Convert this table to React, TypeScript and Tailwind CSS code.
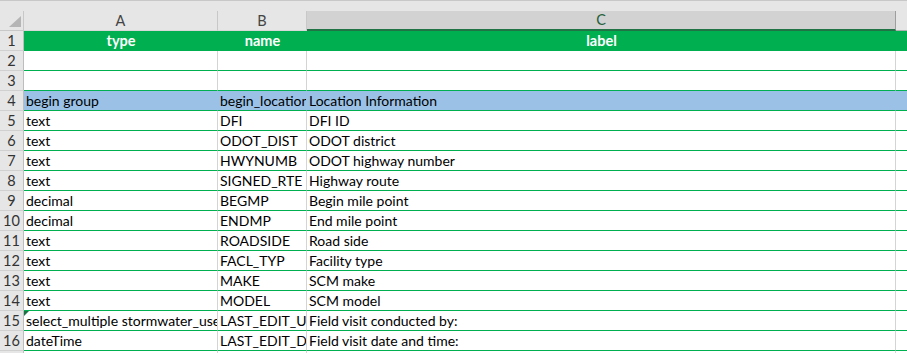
import React from 'react';

const rows: [string, string, string][] = [
  ['', '', ''],
  ['', '', ''],
  ['begin group', 'begin_location', 'Location Information'],
  ['text', 'DFI', 'DFI ID'],
  ['text', 'ODOT_DIST', 'ODOT district'],
  ['text', 'HWYNUMB', 'ODOT highway number'],
  ['text', 'SIGNED_RTE', 'Highway route'],
  ['decimal', 'BEGMP', 'Begin mile point'],
  ['decimal', 'ENDMP', 'End mile point'],
  ['text', 'ROADSIDE', 'Road side'],
  ['text', 'FACL_TYP', 'Facility type'],
  ['text', 'MAKE', 'SCM make'],
  ['text', 'MODEL', 'SCM model'],
  ['select_multiple stormwater_use', 'LAST_EDIT_USER', 'Field visit conducted by:'],
  ['dateTime', 'LAST_EDIT_DATE', 'Field visit date and time:'],
];

const font = { fontFamily: 'Lato, "Open Sans", sans-serif' };

const RowHead = ({ n }: { n: number | string }) => (
  <div className="w-[24px] h-full shrink-0 bg-[#e6e6e6] border-r border-b border-r-[#bdbdbd] border-b-[#d0d0d0] flex items-center justify-center text-[14.5px] text-[#333]">
    {n}
  </div>
);

const Cell = ({ w, text, fill, last, marker }: { w: string; text?: string; fill?: boolean; last?: boolean; marker?: boolean }) => (
  <div
    className={`${w} relative h-full shrink-0 overflow-hidden whitespace-nowrap border-b border-b-[#00b050] pl-[2px] flex items-center text-[14px] text-black ${
      last ? '' : fill ? 'border-r border-r-transparent' : 'border-r border-r-[#d4d4d4]'
    }`}
  >
    {marker && (
      <span className="absolute left-0 top-0 w-0 h-0 border-t-[5px] border-t-[#1e7145] border-r-[5px] border-r-transparent" />
    )}
    {text}
  </div>
);

export default function App() {
  return (
    <div className="w-[907px] h-[353px] overflow-hidden bg-white" style={font}>
      {/* strip above the headers */}
      <div className="h-[11px] bg-[#e6e6e6] border-t border-[#c8c8c8]" />

      {/* column headers */}
      <div className="flex h-5 text-[14.5px] text-[#444]">
        <div className="w-[24px] h-full bg-[#e6e6e6] border-r border-b border-r-[#c8c8c8] border-b-[#c8c8c8] relative">
          <span className="absolute right-[2px] bottom-[3px] w-0 h-0 border-b-[11px] border-b-[#b5b5b5] border-l-[12px] border-l-transparent" />
        </div>
        <div className="w-[194px] h-full bg-[#e6e6e6] border-r border-b border-r-[#c8c8c8] border-b-[#d8d8d8] flex items-center justify-center">A</div>
        <div className="w-[89px] h-full bg-[#e6e6e6] border-r border-b border-r-[#c8c8c8] border-b-[#d8d8d8] flex items-center justify-center">B</div>
        <div className="w-[589px] h-full bg-[#d2d2d2] border-r border-b-2 border-r-[#9e9e9e] border-b-[#217346] flex items-center justify-center text-[#1f5f3a]">C</div>
        <div className="w-[11px] h-full bg-[#e6e6e6] border-b border-b-[#b0b0b0]" />
      </div>

      {/* row 1 */}
      <div className="flex h-5">
        <RowHead n={1} />
        <div className="flex h-full bg-[#00b050] text-white font-bold text-[14.5px]">
          <div className="w-[194px] flex items-center justify-center">type</div>
          <div className="w-[89px] flex items-center justify-center">name</div>
          <div className="w-[589px] flex items-center justify-center">label</div>
          <div className="w-[11px]" />
        </div>
      </div>

      {rows.map((r, i) => {
        const fill = i === 2;
        return (
          <div key={i} className={`flex h-5 ${fill ? 'bg-[#9bc2e6]' : ''}`}>
            <RowHead n={i + 2} />
            <Cell w="w-[194px]" text={r[0]} fill={fill} marker={i === 13} />
            <Cell w="w-[89px]" text={r[1]} fill={fill} />
            <Cell w="w-[589px]" text={r[2]} fill={fill} />
            <Cell w="w-[11px]" fill={fill} last />
          </div>
        );
      })}

      <div className="flex h-5">
        <RowHead n={17} />
        <Cell w="w-[194px]" />
        <Cell w="w-[89px]" />
        <Cell w="w-[589px]" />
        <Cell w="w-[11px]" last />
      </div>
    </div>
  );
}
